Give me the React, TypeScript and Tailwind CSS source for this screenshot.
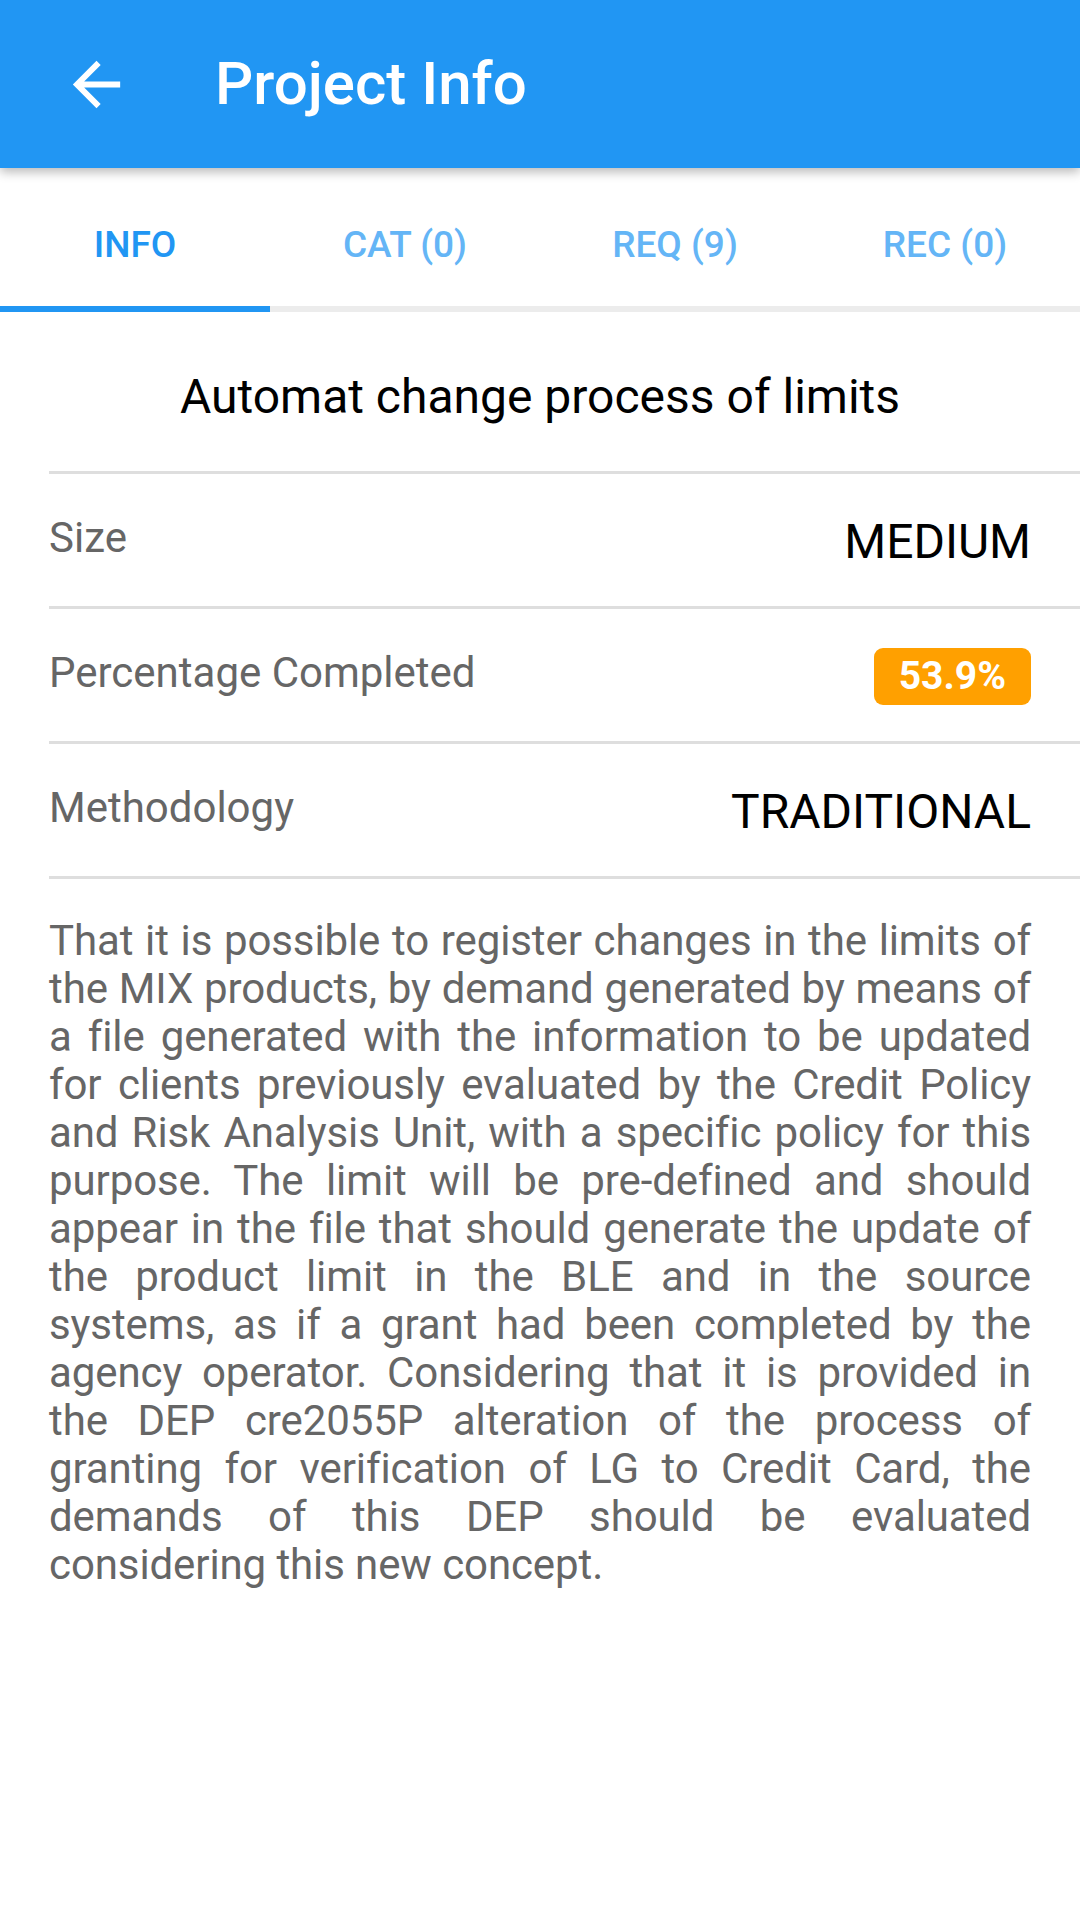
import React from "react";

const tabs = ["INFO", "CAT (0)", "REQ (9)", "REC (0)"];

const description =
  "That it is possible to register changes in the limits of the MIX products, by demand generated by means of a file generated with the information to be updated for clients previously evaluated by the Credit Policy and Risk Analysis Unit, with a specific policy for this purpose. The limit will be pre-defined and should appear in the file that should generate the update of the product limit in the BLE and in the source systems, as if a grant had been completed by the agency operator. Considering that it is provided in the DEP cre2055P alteration of the process of granting for verification of LG to Credit Card, the demands of this DEP should be evaluated considering this new concept.";

const Divider = () => <div className="ml-[49px] h-[3px] bg-[#dedede]" />;

const Row = ({ label, children }: { label: string; children: React.ReactNode }) => (
  <div className="flex h-[132px] items-start justify-between px-[49px] pt-[40px]">
    <span className="text-[42px] leading-[48px] text-[#666666]">{label}</span>
    {children}
  </div>
);

export default function App() {
  const active = 0;

  return (
    <div className="min-h-[1920px] w-[1080px] bg-white font-[Roboto,sans-serif]">
      {/* toolbar */}
      <header className="relative z-10 flex h-[168px] items-center bg-[#2196f3] shadow-[0_4px_10px_rgba(0,0,0,0.28)]">
        <button className="ml-[61px] flex h-[71px] w-[71px] items-center justify-center" aria-label="Back">
          <svg viewBox="0 0 24 24" className="h-[71px] w-[71px]" fill="white">
            <path d="M20 11H7.83l5.59-5.59L12 4l-8 8 8 8 1.41-1.41L7.83 13H20v-2z" />
          </svg>
        </button>
        <h1 className="ml-[83px] text-[60px] font-medium leading-none text-white">Project Info</h1>
      </header>

      {/* tabs */}
      <nav>
        <div className="flex">
          {tabs.map((t, i) => (
            <div
              key={t}
              className={`flex h-[138px] flex-1 items-center justify-center pt-[16px] text-[37px] font-medium ${
                i === active ? "text-[#2196f3]" : "text-[#64b5f6]"
              }`}
            >
              {t}
            </div>
          ))}
        </div>
        <div className="flex h-[6px] bg-[#ececec]">
          <div className="w-[270px] bg-[#2196f3]" />
        </div>
      </nav>

      {/* title */}
      <div className="pb-[46px] pt-[57px] text-center text-[48px] leading-[56px] text-black">
        Automat change process of limits
      </div>

      <Divider />
      <Row label="Size">
        <span className="text-[48px] leading-[56px] text-black">MEDIUM</span>
      </Row>
      <Divider />
      <Row label="Percentage Completed">
        <span className="mt-[-1px] flex h-[57px] items-center rounded-[9px] bg-[#ffa000] px-[25px] text-[39px] font-bold text-white">
          53.9%
        </span>
      </Row>
      <Divider />
      <Row label="Methodology">
        <span className="text-[48px] leading-[56px] text-black">TRADITIONAL</span>
      </Row>
      <Divider />

      <p className="mt-[38px] px-[49px] text-justify text-[42px] leading-[48px] tracking-[-0.1px] text-[#666666]">
        {description}
      </p>
    </div>
  );
}
